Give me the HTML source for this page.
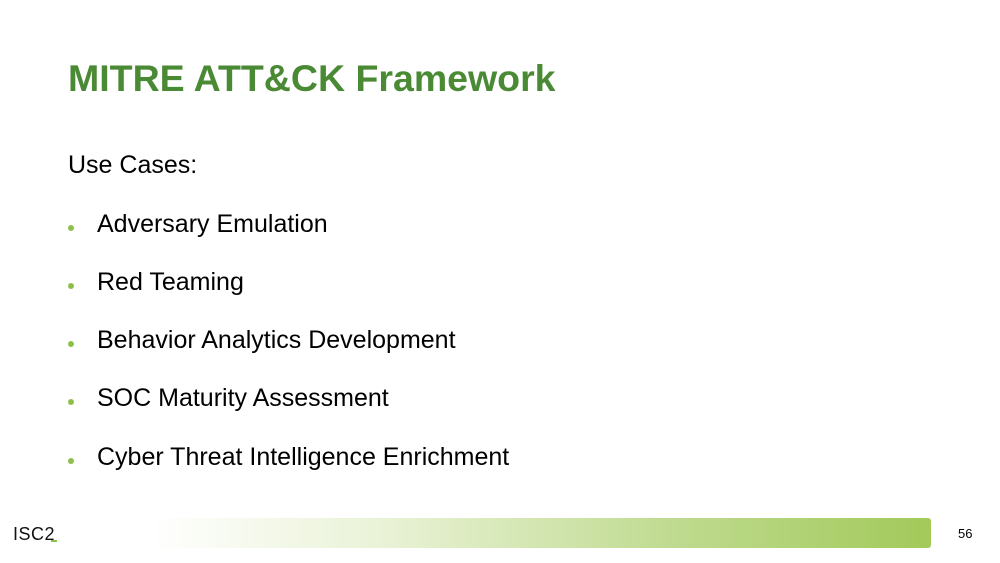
<!DOCTYPE html>
<html><head><style>
body{margin:0;width:1000px;height:563px;background:#fff;position:relative;overflow:hidden;font-family:"Liberation Sans",Arial,sans-serif}
.t{position:absolute;left:68px;top:57px;font-size:37.5px;font-weight:bold;color:#4a8a35;letter-spacing:0px;white-space:nowrap}
.l{position:absolute;font-size:25px;color:#000;white-space:nowrap;line-height:1}
.b{position:absolute;left:68px;width:6px;height:6px;border-radius:50%;background:#8dc04a}
.bar{position:absolute;left:150px;top:518px;width:781px;height:30px;border-radius:3px;background:linear-gradient(to right,#fff 0%,#e9f2d6 30%,#bcd98a 70%,#a3c95a 100%)}
</style></head><body>
<div class="t">MITRE ATT&amp;CK Framework</div>
<div class="l" style="left:68px;top:153px">Use Cases:</div>
<div class="b" style="top:225px"></div><div class="l" style="left:97px;top:212px">Adversary Emulation</div>
<div class="b" style="top:283px"></div><div class="l" style="left:97px;top:270px">Red Teaming</div>
<div class="b" style="top:341px"></div><div class="l" style="left:97px;top:328px">Behavior Analytics Development</div>
<div class="b" style="top:399px"></div><div class="l" style="left:97px;top:386px">SOC Maturity Assessment</div>
<div class="b" style="top:458px"></div><div class="l" style="left:97px;top:445px">Cyber Threat Intelligence Enrichment</div>
<div style="position:absolute;left:13px;top:524px;font-size:18px;color:#111;letter-spacing:0.5px">ISC2</div>
<div style="position:absolute;left:51px;top:540px;width:6px;height:1.5px;background:#8dc04a"></div>
<div class="bar"></div>
<div style="position:absolute;left:958px;top:526px;font-size:13px;color:#000">56</div>
</body></html>
